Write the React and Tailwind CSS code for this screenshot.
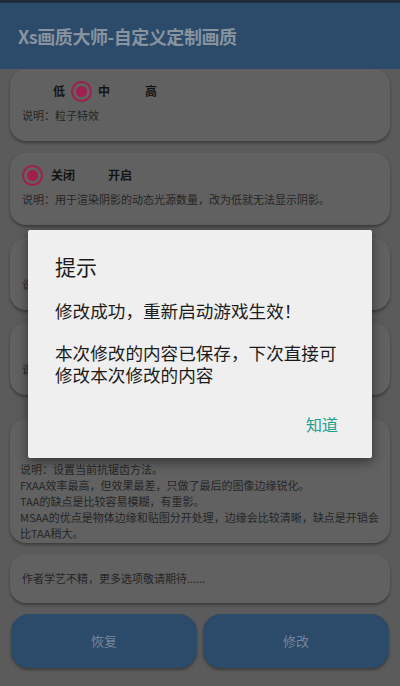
import React from "react";

const font = { fontFamily: '"Noto Sans CJK SC", "Noto Sans", sans-serif' };

const Radio = ({ checked }) => (
  <span className="flex items-center justify-center w-[21px] h-[21px] rounded-full border-2 border-[#a01f4e] shrink-0">
    {checked && <span className="w-[11px] h-[11px] rounded-full bg-[#a01f4e]" />}
  </span>
);

const Card = ({ className = "", children }) => (
  <div className={"mx-[10px] rounded-[16px] bg-[#616161] shadow-[0_2px_3px_rgba(0,0,0,0.35)] px-3 " + className}>
    {children}
  </div>
);

const LevelRow = ({ labels }) => (
  <div className="flex items-center h-[22px] text-[12px] font-bold text-[#151515]">
    <span className="ml-[31px] mr-[6px]">{labels[0]}</span>
    <Radio checked />
    <span className="ml-[6px]">{labels[1]}</span>
    <span className="ml-[35px]">{labels[2]}</span>
  </div>
);

export default function App() {
  return (
    <div style={font} className="relative w-[400px] h-[686px] overflow-hidden bg-[#5b5b5b]">
      <div className="h-[3px] bg-[#1e2c3c]" />
      <div className="h-[66px] bg-[#2c4a69] flex items-center pl-[18px]">
        <span className="text-[18px] font-bold text-[#8893a0] tracking-tight">Xs画质大师-自定义定制画质</span>
      </div>

      <Card className="h-[72px] pt-[11px]">
        <LevelRow labels={["低", "中", "高"]} />
        <div className="mt-[5px] text-[11px] text-[#262626]">说明：粒子特效</div>
      </Card>

      <Card className="h-[72px] pt-[11px] mt-[12px]">
        <div className="flex items-center h-[22px] text-[12px] font-bold text-[#151515]">
          <Radio checked />
          <span className="ml-[8px]">关闭</span>
          <span className="ml-[33px]">开启</span>
        </div>
        <div className="mt-[5px] text-[11px] text-[#262626]">说明：用于渲染阴影的动态光源数量，改为低就无法显示阴影。</div>
      </Card>

      <Card className="h-[72px] pt-[11px] mt-[13px]">
        <LevelRow labels={["低", "中", "高"]} />
        <div className="mt-[5px] text-[11px] text-[#262626]">说明：阴影质量</div>
      </Card>

      <Card className="h-[72px] pt-[11px] mt-[13px]">
        <LevelRow labels={["低", "中", "高"]} />
        <div className="mt-[5px] text-[11px] text-[#262626]">说明：特效质量</div>
      </Card>

      <Card className="h-[124px] pt-[14px] mt-[24px]">
        <LevelRow labels={["FXAA", "TAA", "MSAA"]} />
        <div className="mt-[6px] text-[11px] leading-[16px] text-[#262626] -ml-[2px] -mr-[8px] whitespace-nowrap">
          <div>说明：设置当前抗锯齿方法。</div>
          <div>FXAA效率最高，但效果最差，只做了最后的图像边缘锐化。</div>
          <div>TAA的缺点是比较容易模糊，有重影。</div>
          <div>MSAA的优点是物体边缘和贴图分开处理，边缘会比较清晰，缺点是开销会</div>
          <div>比TAA稍大。</div>
        </div>
      </Card>

      <Card className="h-[49px] mt-[11px] flex items-center">
        <span className="text-[11px] text-[#262626]">作者学艺不精，更多选项敬请期待......</span>
      </Card>

      <div className="mt-[11px] mx-[11px] flex gap-[6px]">
        <button className="flex-1 h-[54px] rounded-[18px] bg-[#2c4a69] shadow-[0_2px_3px_rgba(0,0,0,0.35)] text-[13px] text-[#76849a]">恢复</button>
        <button className="flex-1 h-[54px] rounded-[18px] bg-[#2c4a69] shadow-[0_2px_3px_rgba(0,0,0,0.35)] text-[13px] text-[#76849a]">修改</button>
      </div>

      <div className="absolute left-[28px] top-[230px] w-[344px] h-[228px] bg-[#efefef] rounded-[2px] shadow-[0_4px_12px_rgba(0,0,0,0.45)] pl-[27px] pr-[4px]">
        <div className="mt-[22px] text-[21px] leading-[28px] text-[#1c1c1c]">提示</div>
        <div className="mt-[20px] text-[17.6px] leading-[22px] text-[#1c1c1c] whitespace-nowrap">
          <div>修改成功，重新启动游戏生效！</div>
          <div className="h-[20px]" />
          <div>本次修改的内容已保存，下次直接可</div>
          <div>修改本次修改的内容</div>
        </div>
        <div className="absolute right-[34px] top-[182px] text-[16px] text-[#1f9f8e]">知道</div>
      </div>
    </div>
  );
}
